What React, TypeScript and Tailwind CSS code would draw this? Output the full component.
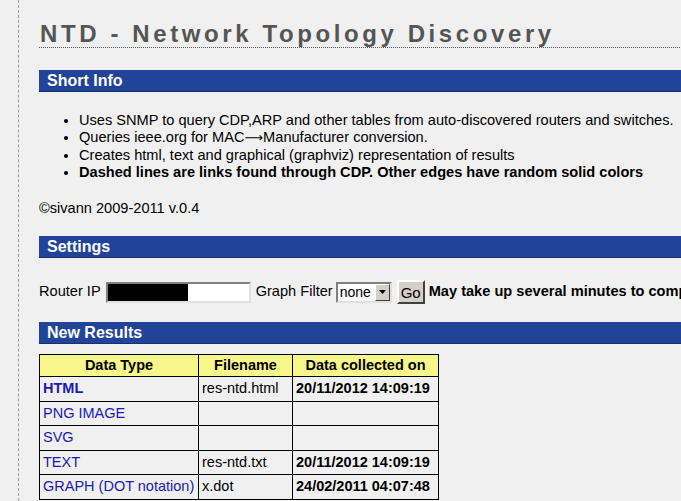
const rows = [
  { type: "HTML", bold: true, file: "res-ntd.html", date: "20/11/2012 14:09:19" },
  { type: "PNG IMAGE", bold: false, file: "", date: "" },
  { type: "SVG", bold: false, file: "", date: "" },
  { type: "TEXT", bold: false, file: "res-ntd.txt", date: "20/11/2012 14:09:19" },
  { type: "GRAPH (DOT notation)", bold: false, file: "x.dot", date: "24/02/2011 04:07:48" },
];

const Bar = ({ title }: { title: string }) => (
  <div className="h-[22px] bg-[#214499] border-b border-[#16306e] pl-2 text-white font-bold text-[16px] leading-[21px]">
    {title}
  </div>
);

export default function App() {
  return (
    <div
      className="w-[681px] h-[501px] overflow-hidden bg-[#f0f0f0] text-black"
      style={{ fontFamily: '"Liberation Sans", Arial, sans-serif' }}
    >
      <div className="ml-[18px] w-[760px] h-[501px] border-l border-dashed border-[#9a9a9a] pl-[20px]">
        <div className="pt-[20px]">
          <h1 className="text-[24px] leading-[27px] font-bold tracking-[3.6px] text-[#555] border-b border-dotted border-[#555] pl-px">
            NTD - Network Topology Discovery
          </h1>
        </div>

        <div className="mt-[22px]">
          <Bar title="Short Info" />
        </div>

        <ul className="mt-[20px] pl-[40px] list-disc text-[14.6px] leading-[17.4px] whitespace-nowrap">
          <li>Uses SNMP to query CDP,ARP and other tables from auto-discovered routers and switches.</li>
          <li>
            Queries ieee.org for MAC
            <span style={{ fontFamily: '"DejaVu Sans", sans-serif' }} className="text-[13px]">⟶</span>
            Manufacturer conversion.
          </li>
          <li>Creates html, text and graphical (graphviz) representation of results</li>
          <li className="font-bold">Dashed lines are links found through CDP. Other edges have random solid colors</li>
        </ul>

        <p className="mt-[18px] text-[14.6px] leading-[17.4px]">©sivann 2009-2011 v.0.4</p>

        <div className="mt-[19px]">
          <Bar title="Settings" />
        </div>

        <div className="mt-[22px] flex items-center text-[14.6px] whitespace-nowrap h-[24px]">
          <span>Router IP</span>
          <div className="ml-[5px] w-[145px] h-[21px] bg-white border-2 border-t-[#808080] border-l-[#808080] border-r-[#e0e0e0] border-b-[#e0e0e0] flex">
            <div className="w-[80px] h-full bg-black" />
          </div>
          <span className="ml-[5px]">Graph Filter</span>
          <div className="ml-[3px] w-[56px] h-[21px] bg-white border-2 border-t-[#808080] border-l-[#808080] border-r-[#e0e0e0] border-b-[#e0e0e0] flex items-center justify-between">
            <span className="text-[14px] pl-[2px] leading-none">none</span>
            <div className="w-[15px] h-[17px] bg-[#d4d0c8] border border-t-white border-l-white border-r-[#404040] border-b-[#404040] flex items-center justify-center">
              <svg width="7" height="4" viewBox="0 0 7 4">
                <path d="M0 0h7L3.5 4z" fill="#000" />
              </svg>
            </div>
          </div>
          <div className="ml-[5px] w-[28px] h-[24px] bg-[#d4d0c8] border-2 border-t-white border-l-white border-r-[#404040] border-b-[#404040] flex items-center justify-center text-[15px] leading-none">
            Go
          </div>
          <span className="ml-[4px] font-bold">May take up several minutes to complete</span>
        </div>

        <div className="mt-[18px]">
          <Bar title="New Results" />
        </div>

        <table className="mt-[10px] border-collapse text-[14.5px] leading-[17px]">
          <thead>
            <tr className="bg-[#f6f68a] h-[22px]">
              <th className="border border-black w-[159px] font-bold text-center px-[3px]">Data Type</th>
              <th className="border border-black w-[94px] font-bold text-center px-[3px]">Filename</th>
              <th className="border border-black w-[146px] font-bold text-center px-[3px]">Data collected on</th>
            </tr>
          </thead>
          <tbody>
            {rows.map((r) => (
              <tr key={r.type} className="h-[24.5px]">
                <td className={`border border-black px-[3px] text-[#1a1ab8] ${r.bold ? "font-bold" : ""}`}>
                  {r.type}
                </td>
                <td className="border border-black px-[3px]">{r.file}</td>
                <td className="border border-black px-[3px] font-bold">{r.date}</td>
              </tr>
            ))}
          </tbody>
        </table>
      </div>
    </div>
  );
}
